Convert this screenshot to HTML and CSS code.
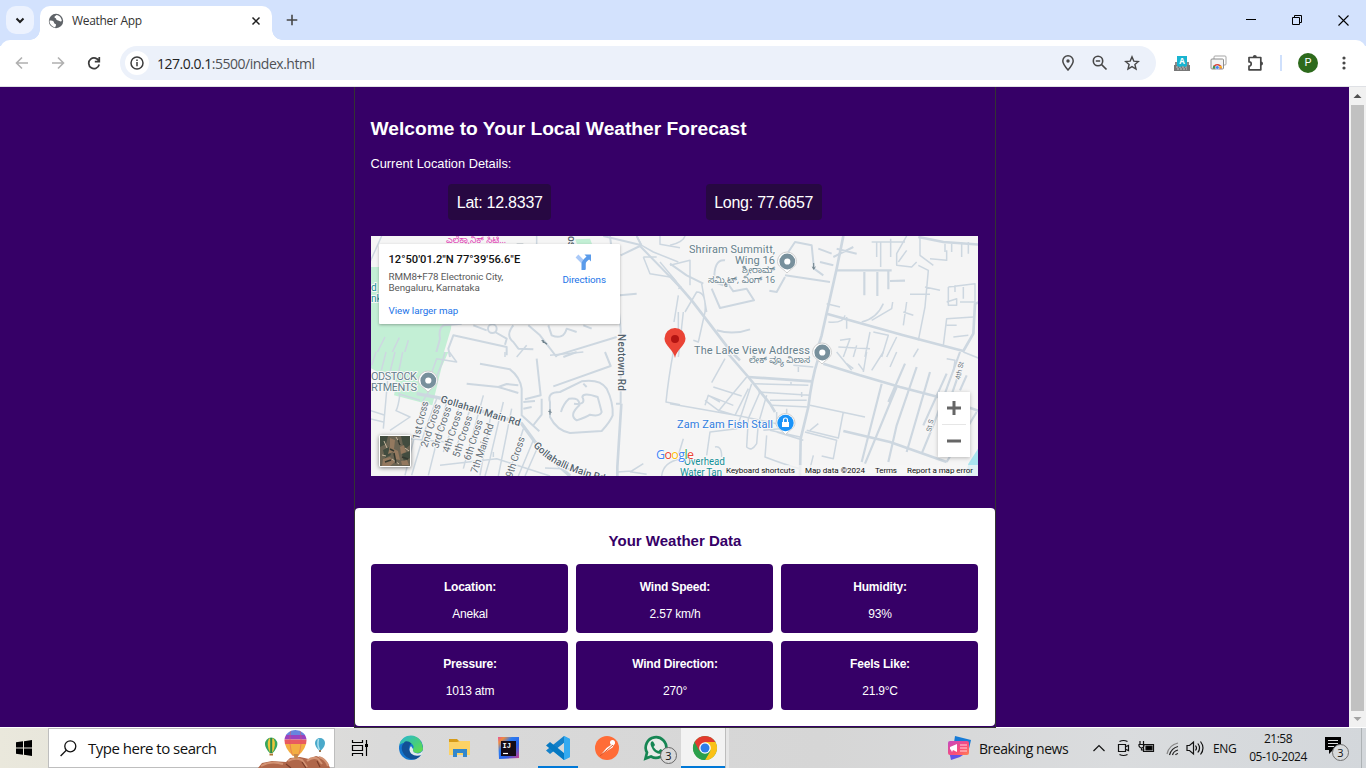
FILE: index.html
```html
<!DOCTYPE html>
<html lang="en">
<head>
<meta charset="utf-8">
<title>Weather App</title>
<link rel="stylesheet" href="styles.css">
</head>
<body>
<header class="tabstrip">
  <div class="tab-search"><svg width="28" height="28" viewBox="0 0 28 28"><path d="M10.500 12.500l3.500 3.500 3.500-3.500" fill="none" stroke="#1f1f1f" stroke-width="2"/></svg></div>
  <div class="tab">
    <svg class="globe" width="16" height="16" viewBox="0 0 16 16"><circle cx="8" cy="8" r="7.200" fill="#5f6368"/><path d="M1.500 7.600c2 .1 3.700.2 4.200 1.200.4 1 .7 2 1.800 2.300 1 .3.600 1.400-.4 3.300C4 14 1.300 11 1.500 7.600zM8.600 1.900c-.8.800-2.200 1-2.100 2.300.1 1 1.400.5 1.600 1.500.2.900.9 1.600 2 1.800 1.200.2 1.700 1 2.700.9l1-.3C13.700 5 11.500 2.200 8.600 1.900z" fill="#fff"/></svg>
    <span class="tab-title">Weather App</span>
    <svg class="tab-close" width="10" height="10" viewBox="0 0 10 10"><path d="M1.500 1.500l7 7M8.500 1.500l-7 7" stroke="#1f1f1f" stroke-width="1.500"/></svg>
  </div>
  <svg class="newtab" width="12" height="12" viewBox="0 0 12 12"><path d="M6 .7v10.600M.7 6h10.600" stroke="#474747" stroke-width="1.600"/></svg>
  <div class="winctl">
    <svg width="10" height="10"><path d="M0 4.500h10" stroke="#000"/></svg>
    <svg width="10" height="10"><path d="M.5 2.500h7v7h-7zM2.500 2.500v-2h7v7h-2" fill="none" stroke="#000"/></svg>
    <svg width="11" height="11"><path d="M.5 .5l10 10M10.500 .5l-10 10" stroke="#000" stroke-width="1.100"/></svg>
  </div>
</header>
<nav class="toolbar">
  <svg class="nav-a" width="14" height="14" viewBox="0 0 14 14"><path d="M13 7H2M7 1.500L1.500 7 7 12.500" fill="none" stroke="#b0b0b0" stroke-width="1.600"/></svg>
  <svg class="nav-b" width="14" height="14" viewBox="0 0 14 14"><path d="M1 7h11M7 1.500L12.500 7 7 12.500" fill="none" stroke="#b0b0b0" stroke-width="1.600"/></svg>
  <svg class="nav-c" width="14" height="14" viewBox="0 0 14 14"><path d="M12 5.400A5.300 5.300 0 1 0 12.200 8.500M12.300 1v4.600H7.800" fill="none" stroke="#3c3c3c" stroke-width="1.700"/></svg>
  <div class="omnibox">
    <div class="info"><svg width="14" height="14" viewBox="0 0 14 14"><circle cx="7" cy="7" r="6" fill="none" stroke="#3c3c3c" stroke-width="1.500"/><path d="M7 6v4.300M7 3.500v1.600" stroke="#3c3c3c" stroke-width="1.500"/></svg></div>
    <span class="url"><b>127.0.0.1</b>:5500/index.html</span>
    <svg class="omni-pin" width="14" height="16" viewBox="0 0 14 16"><path d="M7 15C4 11.500 1.800 8.600 1.800 6a5.200 5.200 0 0 1 10.400 0C12.200 8.600 10 11.500 7 15z" fill="none" stroke="#474747" stroke-width="1.500"/><circle cx="7" cy="6" r="1.700" fill="#474747"/></svg>
    <svg width="16" height="16" viewBox="0 0 16 16"><circle cx="6" cy="6" r="4.700" fill="none" stroke="#474747" stroke-width="1.600"/><path d="M3.800 6h4.400M9.500 9.500l5 5" stroke="#474747" stroke-width="1.700"/></svg>
    <svg width="16" height="16" viewBox="0 0 16 16"><path d="M8 1.900l1.800 4.200 4.600.4-3.500 3 1.100 4.500L8 11.600 4 14l1.100-4.500-3.500-3 4.600-.4z" fill="none" stroke="#474747" stroke-width="1.400"/></svg>
  </div>
  <div class="ext">
    <svg width="16" height="17" viewBox="0 0 16 17"><path d="M1 7h14v9H1z" fill="#8c8c8c"/><path d="M0 10h16v6H0z" fill="#777"/><path d="M2 12h12M3 14h10" stroke="#c5c5c5" stroke-dasharray="2 1"/><path d="M3 1h10v10l-2 1-2-1-3 1-3-1z" fill="#19b4d0"/><text x="8" y="9" text-anchor="middle" class="ext-a">A</text></svg>
    <svg width="17" height="16" viewBox="0 0 17 16"><rect x="4" y="1" width="12" height="9" rx="1" fill="#fff" stroke="#a5a5a5"/><rect x="1" y="4" width="12.500" height="10" rx="1" fill="#f2f2f2" stroke="#8c8c8c"/><path d="M2.700 13.500a4.600 4.600 0 0 1 9.200 0z" fill="#dc4437"/><path d="M2.700 13.500a4.600 4.600 0 0 1 1.100-3l3 3z" fill="#2a9d55"/><path d="M11.900 13.500c0-1-.3-1.700-.8-2.400H7.300z" fill="#fbc116"/><circle cx="7.300" cy="12.500" r="1.900" fill="#4285f4" stroke="#fff" stroke-width=".6"/></svg>
    <svg width="17" height="17" viewBox="0 0 17 17"><path d="M2 2.500h11.800v12.300H2v-3.600c2.700.2 3.200-4.700 0-4.400z" fill="none" stroke="#474747" stroke-width="1.700" stroke-linejoin="round"/><path d="M5.800 2a2 2 0 0 1 4 0zM14 6.500a2 2 0 0 1 0 4z" fill="#474747"/></svg>
  </div>
  <i class="sep"></i>
  <div class="avatar">P</div>
  <svg class="menu" width="4" height="14" viewBox="0 0 4 14"><path d="M2 2v0M2 7v0M2 12v0" stroke="#474747" stroke-width="3.200" stroke-linecap="round"/></svg>
</nav>

<main class="viewport">
  <div class="page">
    <section class="app">
      <h1>Welcome to Your Local Weather Forecast</h1>
      <p class="sub">Current Location Details:</p>
      <div class="coords"><span>Lat: 12.8337</span><span>Long: 77.6657</span></div>
      <div class="map">
        <svg class="map-art" width="607" height="240" viewBox="371 236 607 240">
          <rect x="371" y="236" width="607" height="240" fill="#f5f5f5"/>
          <g transform="translate(370 232) scale(.33333)">
            <path d="M0 105H260L243 290 210 400H0z" fill="#c3efd5"/>
            <path d="M615 22L660 20 667 38H622z" fill="#c3efd5"/>
            <g class="road">
              <path class="w2" d="M0 90L35 12M500 12V36M800 12L815 40 850 60 925 90M820 75l40 0M820 75l20 50 60 10M870 90l50 60M870 12v25l60 10"/>
              <path class="w3" d="M752 70L810 42M700 12L815 40M810 42L930 165M750 190l50 -5M800 12l15 30"/>
              <path class="w3" d="M720 12Q740 170 752 290V375"/>
              <path class="w3" d="M275 275L220 280Q205 290 210 320L195 375M240 375L235 350 250 310 410 345V370M310 280L350 295M375 300L410 320 405 338M430 280Q405 310 430 330L445 350 490 352"/>
              <circle cx="367" cy="290" r="13"/>
              <path class="w3" d="M475 280L510 310 560 375M535 280L545 310Q580 325 590 290L620 300M560 370L740 315M640 280L665 290M580 375L620 360"/>
              <path class="w2" d="M45 315L15 375M88 317L60 375M115 325L100 375M470 340L440 375M925 170l10 -5M925 190L912 270"/>
            </g>
            <path d="M515 325l16 12M520 325v8M440 37h20" stroke="#6e818b" stroke-width="4"/>
          </g>
          <g transform="translate(370 352) scale(.33333)">
            <path d="M0 0H235L215 45 187 160 72 130 80 90 0 47z" fill="#c3efd5"/>
            <g class="road">
              <path class="w2" d="M18 0L5 40M48 0L34 55M75 0L60 60M98 0L86 60M225 0Q210 70 160 145L105 370M90 125Q85 165 78 176L120 195 60 235M0 175L45 190M0 200L40 210M55 60L40 230M175 90L200 20 260 30 238 0M85 125l65 20"/>
              <path class="w5" d="M140 125L205 137 455 215 510 290 600 372"/>
              <path class="w2" d="M200 140L165 235 125 370M230 150L175 370M270 160L220 300M305 160L250 310M340 130L280 350M365 175L330 370M400 150L360 320 345 372M425 170L385 372M460 230L415 372M490 265L445 372M510 270L465 372M120 260L230 270M210 340L380 320 540 372M370 315L370 300"/>
              <path class="w3" d="M330 35L420 52Q450 75 455 110V190L508 238M290 95L385 105 445 123M385 105L410 96 445 100M500 20L512 130 465 142M460 150L495 147M460 170L485 165M515 140V188L488 222"/>
              <path class="w3" d="M550 103L722 42 705 0M640 95L650 105M540 150Q530 120 570 120L635 88Q690 80 710 110Q730 150 728 190Q720 210 695 237L600 243Q560 235 540 195ZM573 180Q580 155 597 140Q630 135 628 160 Q595 190 620 205Q650 195 660 188Q690 195 695 180Q690 160 683 135Q640 120 637 135Q650 160 612 155"/>
              <path class="w3" d="M752 0V155M738 155h14"/>
              <path d="M754 155L742 345V372" stroke-width="9"/>
              <path class="w2" d="M742 360L785 357 820 335M875 372Q880 330 930 322M525 348L620 352 650 372M780 359l50 8M910 0Q895 80 888 150L930 158M405 0v15M540 10L640 0"/>
            </g>
            <path d="M540 172v16M535 178l10 3" stroke="#6e818b" stroke-width="3"/>
          </g>
          <g transform="translate(670 232) scale(.33333)">
            <g class="road">
              <path d="M0 130L65 205 180 355 210 385"/>
              <path d="M520 12L500 110 455 310 435 375" stroke-width="9"/>
              <path d="M470 245L700 310 880 357 910 305 915 215 930 210"/>
              <path d="M745 15L820 30 930 38"/>
              <path class="w4" d="M500 115H665M583 120V190M622 120V192M655 115V172M660 147L705 146"/>
              <path class="w3" d="M0 95L50 130 100 155M345 130L480 150M345 75L375 30 425 40 432 110 460 130M345 135L320 180 298 176M125 170L150 228 252 205 230 170 190 178 170 150M140 295Q190 310 240 292M445 50L485 65M450 90L490 100M490 75L550 45M500 50L560 65M165 85Q130 80 133 150L160 160"/>
              <path class="w2" d="M0 40Q40 30 45 12M25 240V330M45 240L80 180Q110 180 105 240L85 330 70 325M40 240L25 375M0 100L60 85 60 160M95 155L110 240"/>
              <path class="w2" d="M605 30H705M620 30V75M632 32V105M662 20V75M710 12L680 65V100L725 105 740 90M685 90L710 55M750 15V70L790 100M710 210L700 280M700 240L730 250M745 100L775 115 765 225 745 325M720 187H780M765 165L810 175M780 80L830 85V55M825 35V60M845 35V60M875 30V75M895 30V65M575 270Q620 260 640 215M605 265L665 230 668 210M470 215L510 225M475 270Q520 275 525 250M530 255V290M600 300L585 375M610 300L655 310 635 375M680 315L650 375M510 325L540 320 520 375M820 340L830 260 910 255M830 280H860M850 315L895 310M835 165L915 155V210L870 210M835 165V220H860V200L830 210M855 160V180M880 165V200M505 345L600 350M560 340L550 375M745 350L730 375"/>
            </g>
            <path d="M431 93v18M427 104l4 8 5-8" fill="none" stroke="#6e818b" stroke-width="3"/>
          </g>
          <g transform="translate(670 352) scale(.33333)">
            <path d="M924 290L895 335 885 384H930V290z" fill="#a9e4ef"/>
            <g class="road">
              <path d="M170 0L235 75 300 155 315 180"/>
              <path d="M443 25Q425 80 415 165L392 260 390 372" stroke-width="9"/>
              <path d="M460 35L570 70 690 105 805 135 930 178" stroke-width="9"/>
              <path d="M235 75L425 88M520 237L660 270 830 330" stroke-width="7"/>
              <path class="w2" d="M0 155L210 192 320 215M230 75L145 178M165 20L125 92M130 105L215 132M115 130L190 160M105 145L145 175 195 190 235 110M105 160L115 130 150 150M245 95L200 230 120 240 110 310M270 120L235 200 230 285Q245 300 260 275L265 215 290 130M250 95L415 100M265 120L420 130M300 145H410M305 160L415 165M395 120V135M363 90V100M350 170V183"/>
              <path class="w2" d="M420 160L585 195M420 235L445 215M410 235L505 258 520 180M405 240L500 265 490 320 455 312M300 235L390 255M290 250L285 315Q350 340 390 350M280 235L330 230M320 210V180M320 240L400 265M40 260L25 310M135 285Q155 280 155 315"/>
              <path class="w4" d="M635 95L575 330M680 105L585 335M705 35L655 150M740 45L680 220 655 330M780 60L710 300M870 0L790 220 755 305M870 55L820 200M830 65L760 220M920 180L830 330M890 70L870 115"/>
              <path class="w2" d="M500 0L545 55M530 35L550 50M565 35L580 55M590 0L580 60M640 0L605 55M680 0L660 45M830 20L855 25 850 60M880 0L930 20M370 40L430 45M385 45V60M430 310L420 350"/>
            </g>
          </g>
          <g class="lbl">
            <text x="446" y="243" class="kn pink" textLength="60" lengthAdjust="spacingAndGlyphs">ಎಲೆಕ್ಟ್ರಾನಿಕ್ ಸಿಟಿ...</text>
            <text x="371" y="291" class="teal">d</text><text x="371" y="302" class="teal">nk</text>
            <text transform="translate(568 236) rotate(90)" class="road-name">os</text>
            <text x="371" y="380" textLength="46">ODSTOCK</text><text x="371" y="391" textLength="46">RTMENTS</text>
            <text x="775" y="253" text-anchor="end" textLength="86">Shriram Summitt,</text>
            <text x="775" y="264" text-anchor="end" textLength="40">Wing 16</text>
            <text x="775" y="273" class="kn" text-anchor="end" textLength="33" lengthAdjust="spacingAndGlyphs">ಶ್ರೀರಾಮ್</text>
            <text x="775" y="283" class="kn" text-anchor="end" textLength="67" lengthAdjust="spacingAndGlyphs">ಸಮ್ಮಿಟ್, ವಿಂಗ್ 16</text>
            <text x="810" y="354" text-anchor="end" textLength="116">The Lake View Address</text>
            <text x="810" y="363" class="kn" text-anchor="end" textLength="61" lengthAdjust="spacingAndGlyphs">ಲೇಕ್ ವ್ಯೂ ವಿಲಾಸ</text>
            <text x="677" y="428" class="blue" textLength="96">Zam Zam Fish Stall</text>
            <text x="684" y="465" class="teal" textLength="41">Overhead</text><text x="680" y="476" class="teal" textLength="42">Water Tan</text>
            <g class="road-name">
              <text transform="translate(618 334) rotate(90)" textLength="57">Neotown Rd</text>
              <text transform="translate(440 402) rotate(17)" textLength="83">Gollahalli Main Rd</text>
              <path id="gm" d="M533 446Q549 463 568 470T612 484" fill="none"/><text><textPath href="#gm">Gollahalli Main Rd</textPath></text>
            </g>
            <g class="cross">
              <text transform="translate(419 440) rotate(-76)" textLength="39">1st Cross</text>
              <text transform="translate(427 448) rotate(-72)" textLength="45">2nd Cross</text>
              <text transform="translate(438 449) rotate(-72)" textLength="43">3rd Cross</text>
              <text transform="translate(449 453) rotate(-72)" textLength="43">4th Cross</text>
              <text transform="translate(459 458) rotate(-72)" textLength="43">5th Cross</text>
              <text transform="translate(470 461) rotate(-72)" textLength="42">6th Cross</text>
              <text transform="translate(477 474) rotate(-71)" textLength="52">7th Main Rd</text>
              <text transform="translate(512 478) rotate(-72)" textLength="42">9th Cross</text>
              <text class="tiny" transform="translate(960 380) rotate(-78)">4th St</text>
              <text class="tiny" transform="translate(931 432) rotate(-78)">St S</text>
            </g>
          </g>
          <g id="poi"><path d="M428 371a9.500 9.500 0 0 1 9.500 9.500c0 5-5.500 7-9.500 11.500-4-4.500-9.500-6.500-9.500-11.500a9.500 9.500 0 0 1 9.500-9.500z" fill="#fff" stroke="#cfcfcf"/><circle cx="428.300" cy="380.500" r="5.500" fill="#fff" stroke="#78909c" stroke-width="4.800"/></g>
          <use href="#poi" x="359" y="-119"/><use href="#poi" x="394" y="-28"/>
          <path d="M785.500 413.500a9.500 9.500 0 0 1 9.500 9.500c0 5-5.500 7-9.500 11.500-4-4.500-9.500-6.500-9.500-11.500a9.500 9.500 0 0 1 9.500-9.500z" fill="#fff" stroke="#cfcfcf"/><circle cx="785.500" cy="423" r="8.200" fill="#1a93f8"/><path d="M782 422h7v5h-7z" fill="#fff"/><path d="M783.500 422v-2a2 2 0 0 1 4 0v2" fill="none" stroke="#fff" stroke-width="1.200"/>
          <path d="M675 358C674 350 664.500 346 664.500 338.500a10.500 10.500 0 0 1 21 0C685.500 346 676 350 675 358z" fill="#ea4335"/><circle cx="675" cy="339" r="4" fill="#b31412"/>
          <text class="glogo" x="656" y="459" textLength="38"><tspan fill="#4285f4">G</tspan><tspan fill="#ea4335">o</tspan><tspan fill="#fbbc05">o</tspan><tspan fill="#4285f4">g</tspan><tspan fill="#34a853">l</tspan><tspan fill="#ea4335">e</tspan></text>
          <rect x="726" y="465" width="252" height="11" fill="#f5f5f5" opacity=".75"/>
          <g class="legal"><text x="726" y="473" textLength="69">Keyboard shortcuts</text><text x="805" y="473" textLength="60">Map data ©2024</text><text x="875" y="473" textLength="22">Terms</text><text x="907" y="473" textLength="66">Report a map error</text></g>
        </svg>
        <div class="place">
          <div class="place-info"><strong>12°50'01.2"N 77°39'56.6"E</strong><p>RMM8+F78 Electronic City,<br>Bengaluru, Karnataka</p><a>View larger map</a></div>
          <div class="dir"><svg width="18" height="18" viewBox="0 0 18 18"><path d="M2 3l7 7v6" fill="none" stroke="#a9c9f8" stroke-width="4"/><path d="M8.500 17V11c0-2 1-3.500 5-6.500" fill="none" stroke="#5a9bea" stroke-width="4"/><path d="M9.500 1.500H16v7z" fill="#5a9bea"/></svg><a>Directions</a></div>
        </div>
        <svg class="thumb" width="32" height="32" viewBox="0 0 32 32"><rect width="32" height="32" fill="#fff"/><rect x="1" y="1" width="30" height="30" fill="#6b6453"/><path d="M1 1h8l-2 8-6 3zM22 1h9v9l-6 5zM4 15l6-3 2 8-6 3zM23 19l8-3v7l-6 4z" fill="#424c3f"/><path d="M11 3l5 2-1 9 4 2 2 9-5-1-2-7-5 2 2-8zM21 12l4-2 2 7-5 2zM4 24l7-2 5 5-5 4H3zM22 26l6-1 2 5h-7z" fill="#94795f"/><path d="M5 6l3 7M17 2l4 7M13 24l7 5M3 20l4 1M26 13l4 3" stroke="#c7b79c"/><path d="M11 14l4 2M19 5l2 5M15 18l2 10M23 22l6 2M6 27l6-2" stroke="#34382f" stroke-width="1.500"/></svg>
        <div class="zoomctl"><svg width="32" height="66" viewBox="0 0 32 66"><path d="M16 9v14M9 16h14M9 49h14" stroke="#666" stroke-width="3"/><path d="M4 32.500h24" stroke="#e6e6e6"/></svg></div>
      </div>
      <section class="weather">
        <h2>Your Weather Data</h2>
        <div class="cells">
          <div class="cell"><b>Location:</b><span>Anekal</span></div>
          <div class="cell"><b>Wind Speed:</b><span>2.57 km/h</span></div>
          <div class="cell"><b>Humidity:</b><span>93%</span></div>
          <div class="cell"><b>Pressure:</b><span>1013 atm</span></div>
          <div class="cell"><b>Wind Direction:</b><span>270°</span></div>
          <div class="cell"><b>Feels Like:</b><span>21.9°C</span></div>
        </div>
      </section>
    </section>
  </div>
  <div class="scroll"><svg width="17" height="17"><path d="M4.500 11h8L8.500 7z" fill="#505050"/></svg><i></i><svg width="17" height="17"><path d="M4.500 7h8l-4 4z" fill="#a3a3a3"/></svg></div>
</main>

<footer class="taskbar">
  <svg class="start" width="16" height="16" viewBox="0 0 16 16"><path d="M0 2.300l7-1v6.200H0zM8 1.200L16 0v7.500H8zM0 8.500h7v6.200l-7-1zM8 8.500h8V16l-8-1.200z"/></svg>
  <div class="search">
    <svg width="17" height="17" viewBox="0 0 17 17"><circle cx="10.300" cy="6.300" r="5.500" fill="none" stroke="#111" stroke-width="1.300"/><path d="M6.300 10.300L.6 16" stroke="#111" stroke-width="1.300"/></svg>
    <span>Type here to search</span>
    <svg class="balloons" width="76" height="39" viewBox="259 729 76 39">
      <path d="M259 768l4-5 10-2 14 1 4-4 10-1 9 2 7-3 7 2 5 5 2 5z" fill="#b0674a"/><path d="M262 766q10-6 22-2M289 761q7-4 14-1l5 7M308 761q6-5 11-2l4 5M320 757q7 2 9 9" fill="none" stroke="#d39373" stroke-width="2"/><path d="M287 764l5 4M303 762l4 6M318 761l3 6" stroke="#7c3d28" stroke-width="1.200"/>
      <path d="M266 744a6.200 6.500 0 0 1 12.400 0q0 4-4.700 9h-3q-4.700-5-4.700-9z" fill="#38a65e"/><path d="M270 738.500q-3 6 1 14h2.600q4-8 1-14" fill="#edc63c"/><path d="M272.200 738v15" stroke="#258b4c" stroke-width="2"/><path d="M270.500 753.500h3.500v2h-3.500z" fill="#a97630"/>
      <clipPath id="bl"><path d="M285.500 740.500a11 10.500 0 0 1 22 0q0 8-8.500 15.500h-5q-8.500-7.500-8.500-15.500z"/></clipPath><g clip-path="url(#bl)"><path d="M285 729h23v6h-23z" fill="#6785df"/><path d="M285 735h23v4.500h-23z" fill="#9b43bf"/><path d="M285 739.500h23v4.500h-23z" fill="#e85a60"/><path d="M285 744h23v12h-23z" fill="#f3ae42"/><path d="M292 729q-3 15 2 28M301 729q3 15-2 28" fill="none" stroke="#e5575c" opacity=".5"/></g><path d="M294.500 754l1 4.500h3l1-4.500" fill="#c5884a"/>
      <path d="M316 743a5 5 0 0 1 10 0q0 3.500-4 7.500h-2q-4-4-4-7.500z" fill="#4aa9ca"/><path d="M319.500 739q-1.500 6 1 11" stroke="#a8dfee" stroke-width="1.500" fill="none"/><path d="M320 750h2v2h-2z" fill="#997653"/>
    </svg>
  </div>
  <svg class="apps" width="402" height="40" viewBox="333 728 402 40">
    <path d="M352.500 740v2.500h10V740M352.500 756v-2.500h10v2.500M352.500 745.500h10v5h-10zM366.500 740v16" fill="none" stroke="#000" stroke-width="1.200"/><path d="M365 744h3v3h-3z"/>
    <defs><linearGradient id="eg" x2="1" y2="1"><stop stop-color="#27b5d8"/><stop offset=".6" stop-color="#48cf79"/><stop offset="1" stop-color="#65df45"/></linearGradient><linearGradient id="ij" x2="1" y2="1"><stop stop-color="#e94d9a"/><stop offset=".15" stop-color="#f18a3b"/><stop offset=".35" stop-color="#2b7cf0"/><stop offset=".65" stop-color="#2d62e8"/><stop offset="1" stop-color="#d43d8b"/></linearGradient></defs>
    <circle cx="411" cy="748" r="12" fill="#1577cf"/><path d="M399.200 745C402 734 415 733 420 740q3 4 3 9-1 4-6 4-5 0-4-4c2-3-1-6-5-6.500-4-.5-7 1-8.800 2.500z" fill="url(#eg)"/><path d="M405 741.500q-6 6-1 13 5 6 12 4.500 4-2 5.500-5c-6 2-12-.5-12.500-6q0-3 2.500-4.500-3-3-6.500-2z" fill="#125196"/><path d="M413 749q-1 4 5 4.500 3-.5 5-3l-1 4q-6 3-11-1-3-4 0-7.500z" fill="#e3eaec"/>
    <path d="M449 739h8l2 2h11v4h-21z" fill="#d69b18"/><path d="M449 742h8l3-1h10v14h-21z" fill="#fcd265"/><path d="M453 749h14v8h-4v-4h-6v4h-4z" fill="#3287cc"/>
    <path d="M498 737h21v21l-20 1z" fill="url(#ij)"/><path d="M501 741h15v15h-15z" fill="#140b16"/><text x="502.500" y="748" class="ijt">IJ</text><path d="M503 753.500h5" stroke="#fff" stroke-width="1.200"/>
    <path d="M564 736l6 3v18l-6 3-11-9 11-6z" fill="#29a5ef"/><path d="M564 736v7l-14 11-4-3.500z" fill="#1581c9"/><path d="M564 760v-7l-14-11-4 3.500z" fill="#0679c2"/><path d="M558 748l6-5v10z" fill="#d8d8d8"/><path d="M564 736l6 3v18l-6 3z" fill="#34aaf0"/>
    <circle cx="607" cy="748" r="12" fill="#ff6c37"/><path d="M601.500 754l5-6 5-3.500 3.500-2-2.500 5-8 5z" fill="#fff"/><circle cx="612.500" cy="742.500" r="2.500" fill="#fff"/><path d="M600 756l13-11" stroke="#d95728"/>
    <path d="M645.500 758.500l1.500-6a10.300 10.300 0 1 1 4 4z" fill="#e9ebe8" stroke="#168653" stroke-width="2.700"/><path d="M651 742q2-2 3 1l1 2-1.500 2q2 3 5 4l2-2 3.500 2q0 3-3 3-7 0-10-8-1-2 0-4z" fill="#168653"/><circle cx="668.500" cy="755.500" r="8" fill="#d8d8d8" stroke="#686868"/><text x="668.500" y="759.500" text-anchor="middle" class="badge">3</text>
    <path d="M681 728h44v40h-44z" fill="#f3f3f3"/><path d="M725 728h4v40h-4z" fill="#e6e6e6"/><path d="M725.500 728v40" stroke="#bdbdbd"/>
    <circle cx="705" cy="748" r="12" fill="#4caf50"/><path d="M705 742h10.400A12 12 0 0 1 705 760l5.500-9.500z" fill="#fbc116"/><path d="M694.600 742A12 12 0 0 0 705 760l5.300-9-5.300-3z" fill="#2b9f4b"/><path d="M694.600 742a12 12 0 0 1 20.800 0H705l-5.500 9z" fill="#e33b2e"/><circle cx="705" cy="748" r="5.800" fill="#fff"/><circle cx="705" cy="748" r="4.500" fill="#2d7de9"/>
    <path d="M538 766h40v2h-40zM681 766h44v2h-44z" fill="#0078d7"/>
  </svg>
  <div class="news"><svg width="24" height="24" viewBox="0 0 24 24"><path d="M8 0l16 4-3 13L6 13z" fill="#177bd6"/><path d="M2 15l14 4-3 2-9 3z" fill="#6253e8"/><defs><linearGradient id="ng" x2="1" y2="1"><stop stop-color="#c34bc2"/><stop offset=".6" stop-color="#fb4d78"/><stop offset="1" stop-color="#ff8350"/></linearGradient></defs><rect x="1" y="5" width="21" height="14" rx="2" fill="url(#ng)"/><path d="M10 8v8l-4-2-1 2-1-2-1-1v-2z" fill="#fff"/><path d="M13 9h7M13 12h7M13 15h7" stroke="#ffd6d9"/></svg><span>Breaking news</span></div>
  <svg class="tray" width="116" height="20" viewBox="1092 738 116 20"><g fill="none" stroke="#111" stroke-width="1.200"><path d="M1093.500 751l5.500-5.500 5.500 5.500M1119.500 741.500q4-2 8 0M1119.500 754.500q4 2 8 0M1118.500 744.500h7v7h-7zM1126 746.500l2.500-1v5l-2.500-1M1143.500 744.500h10v7h-10zM1140 741v3M1143.500 741v3M1139 744.500h5v1.500q-1 2-2.500 2t-2.500-2zM1141.500 748v2h3"/><path d="M1146 746h6v4h-6z" fill="#000"/><path d="M1187 745.500h2.500l4-3.500v12l-4-3.500h-2.500zM1195.500 745.500q2 2.500 0 5M1197.800 743.500q3.500 4.500 0 9M1200.500 741.500q5 6.500 0 13"/><path d="M1167 754q2-9 11-11" stroke="#888"/><path d="M1169.500 755q2-7 8.500-8.500M1172.500 755q1-4 5.500-5M1175.500 755q.5-1 2.500-1.500" stroke="#222"/></g></svg>
  <span class="lang">ENG</span>
  <div class="clock"><span>21:58</span><span>05-10-2024</span></div>
  <svg class="action" width="26" height="26" viewBox="0 0 26 26"><path d="M0 0h16v13H8l-4 4v-4H0z" fill="#000"/><path d="M3 3.500h10M3 6.500h10M3 9.500h6" stroke="#dcdcdc"/><circle cx="15.500" cy="15.500" r="8" fill="#d7dadc" stroke="#707070"/><text x="15.500" y="19.500" text-anchor="middle" class="badge">3</text></svg>
  <i class="peek"></i>
</footer>
</body>
</html>
```
FILE: styles.css
```css
* { box-sizing: border-box; }
body { margin: 0; width: 1366px; height: 768px; overflow: hidden; display: flex; flex-direction: column; font-family: "Open Sans", "Noto Sans", sans-serif; background: #fff; }
svg { display: block; flex: none; }
i { display: block; }

.tabstrip { height: 46px; margin-bottom: -6px; background: #d3e2fd; display: flex; align-items: flex-start; padding: 6px 17px 0 6px; }
.tab-search { width: 28px; height: 28px; border-radius: 10px; background: #ecf2fe; }
.tab { width: 232px; height: 34px; margin-left: 6px; background: #fff; border-radius: 10px 10px 0 0; display: flex; align-items: center; padding: 0 11px 5px 8px; position: relative; }
.tab::before, .tab::after { content: ""; position: absolute; bottom: 0; width: 10px; height: 10px; }
.tab::before { left: -10px; background: radial-gradient(circle at 0 0, transparent 9.500px, #fff 10px); }
.tab::after { right: -10px; background: radial-gradient(circle at 100% 0, transparent 9.500px, #fff 10px); }
.tab-title { margin-left: 8px; font-size: 12px; color: #333; flex: 1; letter-spacing: -.3px; }
.newtab { margin: 8px 0 0 14px; }
.winctl { margin: 9px 0 0 auto; display: flex; gap: 36px; }

.toolbar { height: 47px; background: #fff; border-radius: 10px 10px 0 0; border-bottom: 1px solid #dfe1e5; display: flex; align-items: center; position: relative; }
.nav-a { margin-left: 15px; }
.nav-b { margin-left: 22px; }
.nav-c { margin-left: 22px; }
.omnibox { width: 1036px; height: 34px; margin-left: 19px; border-radius: 17px; background: #ecf1fa; display: flex; align-items: center; gap: 16px; padding: 0 16px 0 5px; }
.info { width: 24px; height: 24px; border-radius: 50%; background: #fff; display: grid; place-items: center; }
.url { font-size: 14px; color: #4f5256; margin-left: -8px; flex: 1; letter-spacing: -.48px; }
.url b { font-weight: 400; color: #222; }
.omni-pin { margin-right: 1px; }
.ext { display: flex; gap: 20px; margin-left: 18px; align-items: center; }
.ext-a { font: bold 8px "Open Sans", sans-serif; fill: #fff; }
.sep { width: 2px; height: 16px; background: #cfe0fc; margin-left: 16px; }
.avatar { width: 20px; height: 20px; border-radius: 50%; background: #2d6a1c; color: #fff; font: 11px/20px Roboto, sans-serif; text-align: center; margin-left: 16px; }
.menu { margin-left: 24px; }

.viewport { height: 641px; display: flex; }
.page { width: 1349px; height: 640px; background: #360067; display: flex; justify-content: center; }
.app { width: 642px; height: 641px; border: 1px solid #333; border-top: 0; font-family: "Liberation Sans", Arial, sans-serif; color: #fff; margin-left: 1px; }
.app h1 { margin: 31px 0 0 15.500px; font-size: 19.200px; line-height: 22px; }
.sub { margin: 16px 0 12px 15.500px; font-size: 12.800px; line-height: 16px; }
.coords { display: flex; justify-content: space-around; padding: 0 96px 0 16px; height: 36px; }
.coords span { background: #270842; border-radius: 4px; padding: 0 8.500px; line-height: 37px; font-size: 16px; white-space: nowrap; letter-spacing: -.25px; }
.map { position: relative; width: 607px; height: 240px; margin: 16px 0 32px 16px; overflow: hidden; font-family: Roboto, sans-serif; }
.road path, .road circle { fill: none; stroke: #cdd7e0; stroke-width: 8; stroke-linejoin: round; }
.road .w2 { stroke-width: 4.500; }
.road .w3, .road circle { stroke-width: 6; }
.road .w4 { stroke-width: 6.500; }
.road .w5 { stroke-width: 10; }
.lbl { font: 11px Roboto, sans-serif; fill: #66808c; paint-order: stroke; stroke: #f8f8f8; stroke-width: 2px; stroke-linejoin: round; }
.lbl .kn { font: 9px "Noto Sans Kannada", "Noto Sans", sans-serif; }
.lbl .pink { fill: #e13bb4; }
.lbl .teal { fill: #159097; font-size: 10px; }
.lbl .blue { fill: #2f7de0; }
.road-name { font-size: 10px; font-weight: 500; fill: #53626d; }
#gm { stroke: none; }
.cross { font-size: 10.200px; fill: #667078; }
.cross .tiny { font-size: 7px; }
.glogo { font: 500 12.500px "Open Sans", sans-serif; paint-order: stroke; stroke: #fff; stroke-width: 1px; }
.legal { font: 8px Roboto, sans-serif; fill: #111; }
.place { position: absolute; left: 8px; top: 8px; width: 241px; height: 80px; background: #fff; box-shadow: 0 1px 3px rgba(0,0,0,.3); border-radius: 1px; display: flex; justify-content: space-between; padding: 8px 14px 0 9.500px; font-size: 10px; }
.place strong { display: block; font-weight: 500; font-size: 11.200px; line-height: 15px; color: #111; white-space: nowrap; }
.place p { margin: 4px 0 12px; line-height: 11px; color: #5b5b5b; font-size: 9.800px; letter-spacing: -.08px; }
.place a { display: block; color: #1a73e8; line-height: 12px; font-size: 9.800px; letter-spacing: -.05px; }
.dir { display: flex; flex-direction: column; align-items: center; gap: 3px; padding-top: 1px; }
.thumb { position: absolute; left: 8px; top: 199px; box-shadow: 0 1px 4px rgba(0,0,0,.5); border-radius: 2px; }
.zoomctl { position: absolute; left: 567px; top: 156px; width: 32px; height: 65px; background: #fff; box-shadow: 0 1px 4px rgba(0,0,0,.25); }
.weather { width: 640px; height: 218px; background: #fff; border-radius: 4px; padding: 24px 16px 0; color: #360067; }
.weather h2 { margin: 0 0 14px; font-size: 15px; line-height: 18px; text-align: center; }
.cells { display: grid; grid-template-columns: repeat(3, 197px); grid-auto-rows: 69px; gap: 8px; }
.cell { background: #360067; border-radius: 4px; color: #fff; text-align: center; font-size: 12px; padding: 16px 0 0 1px; display: flex; flex-direction: column; gap: 13px; line-height: 14px; letter-spacing: -.2px; }
.scroll { width: 17px; height: 640px; background: #f1f1f1; display: flex; flex-direction: column; }
.scroll i { width: 13px; height: 606px; margin: 1px 2px -1px; background: #c1c1c1; }

.taskbar { height: 40px; background: linear-gradient(90deg, #eae8dc 0, #dadada 28%, #d6d6d6 60%, #dadcde 82%, #d3d7db 100%); display: flex; align-items: center; color: #111; }
.start { margin-left: 16px; }
.search { width: 287px; height: 40px; margin-left: 16px; border: 1px solid #bebebe; background: #fff; display: flex; align-items: center; padding-left: 11px; font-size: 15px; white-space: nowrap; }
.search span { margin-left: 11px; width: 171px; letter-spacing: -.5px; }
.apps { margin-left: -2px; }
.ijt { font: bold 7px "Liberation Mono", monospace; fill: #fff; }
.badge { font: 11px "Open Sans", sans-serif; fill: #111; }
.news { margin-left: 212px; width: 145px; display: flex; align-items: center; gap: 8px; font-size: 14px; white-space: nowrap; letter-spacing: -.45px; }
.lang { margin-left: 5px; width: 24px; font-size: 12px; letter-spacing: -.4px; }
.clock { width: 76px; margin-left: 3px; font-size: 12px; line-height: 18px; padding-bottom: 1px; display: flex; flex-direction: column; align-items: center; letter-spacing: -.5px; }
.action { margin: 4px 0 0 9px; }
.peek { margin-left: auto; margin-right: 4px; width: 1px; height: 40px; background: #adb2b5; }
```
